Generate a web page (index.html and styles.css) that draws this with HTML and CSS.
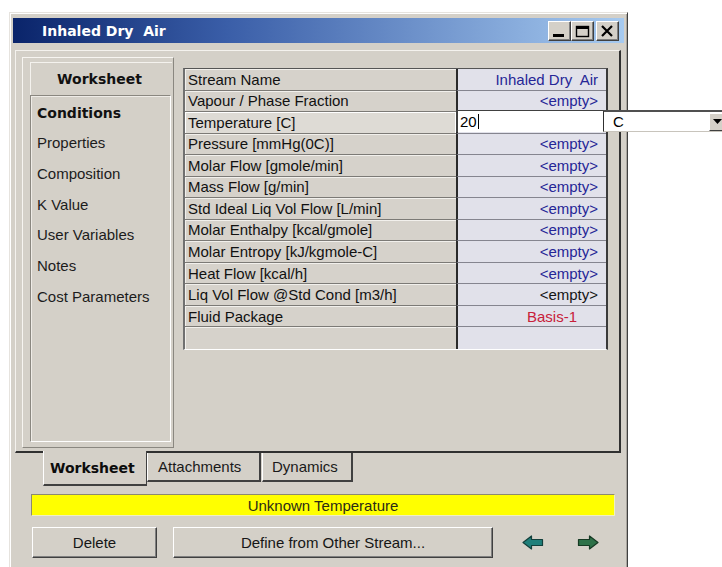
FILE: index.html
```html
<!DOCTYPE html>
<html>
<head>
<meta charset="utf-8">
<title>Inhaled Dry Air</title>
<link rel="stylesheet" href="styles.css">
</head>
<body>
<div class="window">
  <div class="titlebar">
    <span class="title">Inhaled Dry&nbsp; Air</span>
    <div class="caption-buttons">
      <span class="cap-btn"><svg width="23" height="20" viewBox="0 0 23 20"><rect x="5" y="13" width="11" height="3" fill="#000"/></svg></span>
      <span class="cap-btn"><svg width="23" height="20" viewBox="0 0 23 20"><rect x="5.5" y="5.5" width="12" height="10" fill="none" stroke="#000" stroke-width="1.4"/><rect x="5" y="5" width="13" height="3" fill="#000"/></svg></span>
      <span class="cap-btn close"><svg width="23" height="20" viewBox="0 0 23 20"><path d="M6 5 L16 15 M16 5 L6 15" stroke="#000" stroke-width="2.2"/></svg></span>
    </div>
  </div>

  <div class="tabpanel">
    <div class="nav">
      <div class="nav-head">Worksheet</div>
      <ul class="nav-list">
        <li class="active">Conditions</li>
        <li>Properties</li>
        <li>Composition</li>
        <li>K Value</li>
        <li>User Variables</li>
        <li>Notes</li>
        <li>Cost Parameters</li>
      </ul>
    </div>

    <div class="sheet">
      <div class="row"><div class="label">Stream Name</div><div class="val">Inhaled Dry&nbsp; Air</div></div>
      <div class="row"><div class="label">Vapour / Phase Fraction</div><div class="val">&lt;empty&gt;</div></div>
      <div class="row editing">
        <div class="label focus">Temperature [C]</div><div class="val"></div>
        <div class="editor">
          <div class="edit-box">20<span class="caret"></span></div>
          <div class="combo"><span class="combo-text">C</span><span class="combo-btn"><svg width="9" height="5" viewBox="0 0 9 5"><path d="M0 0 H9 L4.5 5 Z" fill="#000"/></svg></span></div>
        </div>
      </div>
      <div class="row"><div class="label">Pressure [mmHg(0C)]</div><div class="val">&lt;empty&gt;</div></div>
      <div class="row"><div class="label">Molar Flow [gmole/min]</div><div class="val">&lt;empty&gt;</div></div>
      <div class="row"><div class="label">Mass Flow [g/min]</div><div class="val">&lt;empty&gt;</div></div>
      <div class="row"><div class="label">Std Ideal Liq Vol Flow [L/min]</div><div class="val">&lt;empty&gt;</div></div>
      <div class="row"><div class="label">Molar Enthalpy [kcal/gmole]</div><div class="val">&lt;empty&gt;</div></div>
      <div class="row"><div class="label">Molar Entropy [kJ/kgmole-C]</div><div class="val">&lt;empty&gt;</div></div>
      <div class="row"><div class="label">Heat Flow [kcal/h]</div><div class="val">&lt;empty&gt;</div></div>
      <div class="row"><div class="label">Liq Vol Flow @Std Cond [m3/h]</div><div class="val plain">&lt;empty&gt;</div></div>
      <div class="row"><div class="label">Fluid Package</div><div class="val basis">Basis-1</div></div>
      <div class="row last"><div class="label"></div><div class="val"></div></div>
    </div>
  </div>

  <div class="tabs">
    <div class="tab selected">Worksheet</div>
    <div class="tab attach">Attachments</div>
    <div class="tab dyn">Dynamics</div>
  </div>

  <div class="status">Unknown Temperature</div>

  <div class="actions">
    <button class="btn delete">Delete</button>
    <button class="btn define">Define from Other Stream...</button>
    <span class="arrow prev"><svg width="22" height="15" viewBox="0 0 22 15"><polygon points="1,7.5 9.5,1 9.5,4.5 20.5,4.5 20.5,10.5 9.5,10.5 9.5,14" fill="#1f7f7a" stroke="#123f3b" stroke-width="1.2" stroke-linejoin="round"/></svg></span>
    <span class="arrow next"><svg width="22" height="15" viewBox="0 0 22 15"><polygon points="21,7.5 12.5,1 12.5,4.5 1.5,4.5 1.5,10.5 12.5,10.5 12.5,14" fill="#2d7148" stroke="#163a24" stroke-width="1.2" stroke-linejoin="round"/></svg></span>
  </div>
</div>
</body>
</html>
```

FILE: styles.css
```css
* {
  box-sizing: border-box;
}

html, body {
  margin: 0;
  width: 722px;
  height: 567px;
  overflow: hidden;
  background: #ffffff;
}

body {
  font-family: "Liberation Sans", Arial, sans-serif;
  font-size: 15px;
  color: #111;
}

/* ---------- window frame (continues below the visible area) ---------- */
.window {
  margin: 12px 0 0 9px;
  width: 619px;
  height: 555px;
  background: #d4d0c8;
  border: 1px solid;
  border-bottom-width: 0;
  border-color: #e6e3de #404040 #404040 #e6e3de;
  box-shadow: inset 1px 1px #ffffff, inset -1px 0 #a9a59e;
  padding: 5px 3px 0 3px;
}

.titlebar {
  height: 25px;
  display: flex;
  align-items: center;
  padding-left: 29px;
  background: linear-gradient(90deg, #0a246a 0%, #3a5ea8 35%, #a6caf0 100%);
}

.title {
  font-family: "DejaVu Sans", sans-serif;
  font-weight: bold;
  font-size: 14px;
  color: #ffffff;
  white-space: pre;
}

.caption-buttons {
  margin-left: auto;
  display: flex;
  padding-right: 5px;
}

.cap-btn {
  width: 23px;
  height: 20px;
  display: block;
  background: #d4d0c8;
  border: 1px solid;
  border-color: #ffffff #404040 #404040 #ffffff;
  box-shadow: inset -1px -1px #808080;
}

.cap-btn svg {
  display: block;
  margin: -1px 0 0 -1px;
}

.cap-btn.close {
  margin-left: 2px;
}

/* ---------- tab page ---------- */
.tabpanel {
  margin: 7px 0 0 2px;
  width: 606px;
  height: 403px;
  display: flex;
  align-items: flex-start;
  padding: 6px 0 0 6px;
  border: 1px solid;
  border-width: 1px 2px 2px 1px;
  border-color: #f4f2ee #303030 #303030 #f4f2ee;
}

/* left navigation */
.nav {
  width: 152px;
  height: 391px;
  border: 1px solid;
  border-color: #f7f5f1 #8a8780 #8a8780 #f7f5f1;
  padding: 4px 1px 5px 7px;
}

.nav-head {
  height: 33px;
  display: flex;
  align-items: center;
  justify-content: center;
  font-family: "DejaVu Sans", sans-serif;
  font-weight: bold;
  font-size: 14px;
  color: #111;
  border-top: 1px solid #f4f2ee;
  border-left: 1px solid #f4f2ee;
  padding-right: 4px;
}

.nav-list {
  list-style: none;
  margin: 0;
  height: 347px;
  padding: 1px 0 0 6px;
  width: 141px;
  border: 1px solid;
  border-color: #8a8780 #ffffff #ffffff #8a8780;
  box-shadow: inset 1px 1px #efece7;
}

.nav-list li {
  height: 30.67px;
  display: flex;
  align-items: center;
  color: #1c1c1c;
}

.nav-list li.active {
  font-family: "DejaVu Sans", sans-serif;
  font-weight: bold;
  font-size: 14px;
  color: #111;
  padding-top: 1px;
}

/* property grid */
.sheet {
  margin: 11px 0 0 9px;
  width: 425px;
  border: 1px solid;
  border-width: 1px 2px 1px 2px;
  border-color: #555 #3a3a3a #ffffff #707070;
}

.row {
  display: flex;
  height: 21.54px;
}

.row.editing {
  position: relative;
}

.label {
  width: 271px;
  padding-left: 3px;
  display: flex;
  align-items: center;
  white-space: nowrap;
  background: #d6d2cb;
  border-bottom: 1px solid #7c7a76;
  box-shadow: inset 1px 1px #f2f0ec;
}

.label.focus {
  background: #dedbd5;
  box-shadow: inset 1px 1px #ffffff, inset -1px 0 #ffffff;
}

.val {
  width: 150px;
  border-left: 2px solid #2a2a2a;
  border-bottom: 1px solid #85858f;
  background: #e1e1ea;
  display: flex;
  align-items: center;
  justify-content: flex-end;
  padding-right: 8px;
  white-space: pre;
  color: #262696;
}

.val.plain {
  color: #151515;
}

.val.basis {
  color: #c8203a;
  padding-right: 29px;
}

.row.last .label,
.row.last .val {
  border-bottom: none;
}

/* in-place editor over the Temperature value cell */
.editor {
  position: absolute;
  left: 271px;
  top: -2px;
  display: flex;
  height: 22px;
}

.edit-box {
  width: 147px;
  height: 22px;
  background: #ffffff;
  border-top: 1px solid #404040;
  border-left: 2px solid #404040;
  padding-left: 2px;
  display: flex;
  align-items: center;
  color: #000;
}

.caret {
  display: inline-block;
  width: 1px;
  height: 15px;
  background: #000;
  margin-left: 1px;
}

.combo {
  width: 124px;
  height: 22px;
  background: #ffffff;
  border-top: 2px solid #505050;
  border-left: 1px solid #303030;
  border-bottom: 1px solid #c8c4bc;
  display: flex;
  align-items: center;
  padding-left: 9px;
  color: #000;
}

.combo-text {
  flex: 1;
}

.combo-btn {
  width: 17px;
  height: 18px;
  background: #d4d0c8;
  border: 1px solid;
  border-color: #ffffff #404040 #404040 #ffffff;
  display: flex;
  align-items: center;
  justify-content: center;
  margin-right: 1px;
}

.combo-btn svg {
  display: block;
}

/* ---------- tabs ---------- */
.tabs {
  display: flex;
  align-items: flex-start;
  padding-left: 30px;
  height: 33px;
}

.tab {
  display: flex;
  align-items: center;
  background: #d4d0c8;
  border-left: 1px solid #ffffff;
  border-right: 2px solid #404040;
  border-bottom: 2px solid #404040;
  color: #1a1a1a;
  white-space: nowrap;
}

.tab.selected {
  margin-top: -2px;
  width: 104px;
  height: 35px;
  padding: 0 0 0 6px;
  font-family: "DejaVu Sans", sans-serif;
  font-weight: bold;
  font-size: 14px;
  color: #0c0c0c;
  border-right-width: 1px;
}

.tab.attach {
  width: 114px;
  height: 29px;
  padding: 0 0 0 10px;
}

.tab.dyn {
  margin-left: 1px;
  width: 91px;
  height: 29px;
  padding: 0 0 0 9px;
}

/* ---------- status line ---------- */
.status {
  margin: 8px 0 0 18px;
  width: 584px;
  height: 22px;
  background: #ffff00;
  border: 1px solid;
  border-color: #8c8a70 #f0f0c0 #f0f0c0 #8c8a70;
  display: flex;
  align-items: center;
  justify-content: center;
  color: #2b2b16;
}

/* ---------- buttons ---------- */
.actions {
  display: flex;
  align-items: center;
  margin-top: 11px;
  padding-left: 19px;
  height: 31px;
}

.btn {
  height: 31px;
  font-family: "Liberation Sans", Arial, sans-serif;
  font-size: 15px;
  color: #161616;
  background: #d4d0c8;
  border: 1px solid;
  border-color: #ffffff #404040 #404040 #ffffff;
  box-shadow: inset -1px -1px #808080;
  padding: 0;
}

.btn.delete {
  width: 125px;
}

.btn.define {
  width: 320px;
  margin-left: 16px;
}

.arrow {
  display: block;
}

.arrow svg {
  display: block;
}

.arrow.prev {
  margin-left: 29px;
}

.arrow.next {
  margin-left: 33px;
}
```
